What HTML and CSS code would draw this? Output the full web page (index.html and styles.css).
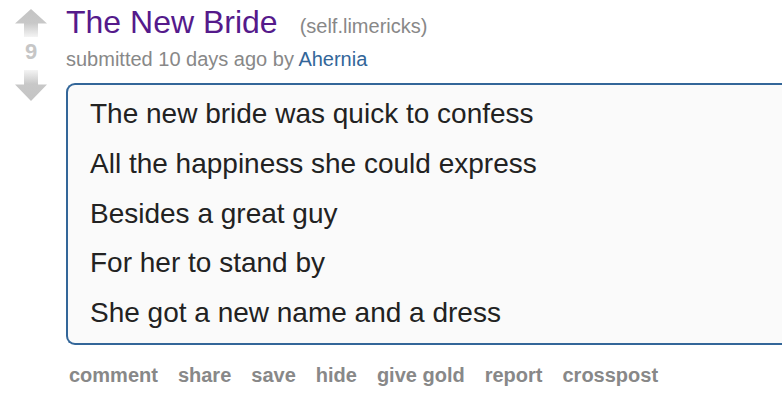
FILE: index.html
```html
<!DOCTYPE html>
<html>
<head>
<meta charset="utf-8">
<link rel="stylesheet" href="styles.css">
</head>
<body>
<div class="thing">
  <div class="midcol">
    <svg class="arrow up" width="32" height="28" viewBox="0 0 32 28">
      <defs>
        <linearGradient id="gu" x1="0" y1="0" x2="0" y2="1">
          <stop offset="0" stop-color="#c4c4c4"/>
          <stop offset="0.5" stop-color="#c8c8c8"/>
          <stop offset="1" stop-color="#f4f4f4"/>
        </linearGradient>
      </defs>
      <polygon points="16,0 32,14.5 23,14.5 23,28 9,28 9,14.5 0,14.5" fill="url(#gu)"/>
    </svg>
    <div class="score">9</div>
    <svg class="arrow down" width="32" height="31" viewBox="0 0 32 31">
      <defs>
        <linearGradient id="gd" x1="0" y1="0" x2="0" y2="1">
          <stop offset="0" stop-color="#f4f4f4"/>
          <stop offset="0.45" stop-color="#c8c8c8"/>
          <stop offset="1" stop-color="#c4c4c4"/>
        </linearGradient>
      </defs>
      <polygon points="9,0 23,0 23,14.5 32,14.5 16,31 0,14.5 9,14.5" fill="url(#gd)"/>
    </svg>
  </div>
  <div class="entry">
    <p class="title"><a class="title-link" href="#">The New Bride</a><span class="domain">(self.limericks)</span></p>
    <p class="tagline">submitted 10 days ago by <a class="author" href="#">Ahernia</a></p>
    <div class="usertext">
      <p>The new bride was quick to confess</p>
      <p>All the happiness she could express</p>
      <p>Besides a great guy</p>
      <p>For her to stand by</p>
      <p>She got a new name and a dress</p>
    </div>
    <ul class="buttons">
      <li>comment</li>
      <li>share</li>
      <li>save</li>
      <li>hide</li>
      <li>give gold</li>
      <li>report</li>
      <li>crosspost</li>
    </ul>
  </div>
</div>
</body>
</html>
```

FILE: styles.css
```css
html, body {
  margin: 0;
  padding: 0;
  background: #fff;
}
body {
  font-family: "Liberation Sans", Arial, sans-serif;
}
.thing {
  display: flex;
  align-items: flex-start;
}
.midcol {
  width: 32px;
  margin-left: 15px;
  padding-top: 9px;
  display: flex;
  flex-direction: column;
  align-items: center;
}
.arrow {
  display: block;
}
.score {
  font-size: 22px;
  font-weight: bold;
  line-height: 24px;
  color: #c6c6c6;
  margin-top: 3px;
  text-align: center;
}
.down {
  margin-top: 6px;
}
.entry {
  margin-left: 19px;
  flex: 1;
  min-width: 0;
}
.title {
  margin: 4px 0 0 0;
  font-size: 32px;
  line-height: 36px;
  white-space: nowrap;
}
.title-link {
  color: #551a8b;
  text-decoration: none;
}
.domain {
  font-size: 20px;
  color: #888;
  margin-left: 22px;
}
.tagline {
  margin: 3px 0 0 0;
  font-size: 20px;
  line-height: 24px;
  color: #888;
  white-space: nowrap;
}
.author {
  color: #336699;
  text-decoration: none;
}
.usertext {
  margin-top: 12px;
  border: 2px solid #336699;
  border-right: none;
  border-radius: 9px 0 0 9px;
  background: #fafafa;
  padding: 4px 0 5.5px 22px;
}
.usertext p {
  margin: 0;
  font-size: 28px;
  line-height: 49.75px;
  color: #222;
  white-space: nowrap;
}
.buttons {
  list-style: none;
  margin: 18px 0 0 0;
  padding: 0 0 0 3px;
  display: flex;
  gap: 20px;
  font-size: 20px;
  font-weight: bold;
  line-height: 24px;
  color: #888;
}
```
